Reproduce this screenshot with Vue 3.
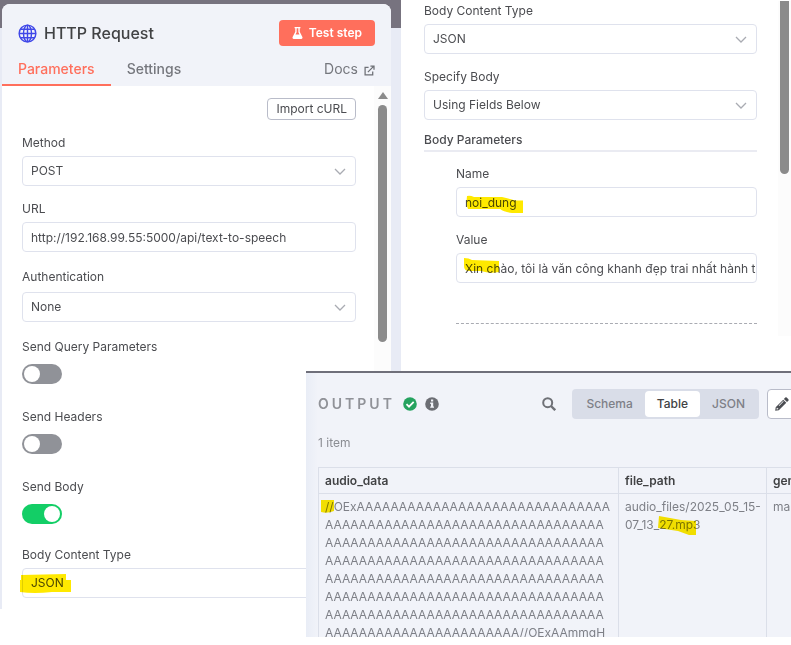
<script setup>
import { ref } from 'vue'

const method = ref('POST')
const url = ref('http://192.168.99.55:5000/api/text-to-speech')
const auth = ref('None')
const sendQuery = ref(false)
const sendHeaders = ref(false)
const sendBody = ref(true)
const contentType = ref('JSON')
const specifyBody = ref('Using Fields Below')
const paramName = ref('noi_dung')
const paramValue = ref('Xin chào, tôi là văn công khanh đẹp trai nhất hành tinh')

const views = ['Schema', 'Table', 'JSON']
const view = ref('Table')

const fullLine = 'A'.repeat(33)
const audioLines = [
  'OEx' + 'A'.repeat(30),
  ...Array(6).fill(fullLine),
  'A'.repeat(23) + '//OExAAmmgH',
]
</script>

<template>
  <main class="page">
    <section class="stage">
      <div class="node">
        <header class="node-head">
          <div class="title-row">
            <svg class="globe" viewBox="0 0 20 20" aria-hidden="true">
              <g fill="none" stroke="#4048e8" stroke-width="1.5">
                <circle cx="10" cy="10" r="8.8" />
                <ellipse cx="10" cy="10" rx="4.2" ry="8.8" />
                <path d="M10 1.2v17.6M1.2 10h17.6M2.6 5.6h14.8M2.6 14.4h14.8" />
              </g>
            </svg>
            <h1>HTTP Request</h1>
            <button class="test" type="button">
              <svg viewBox="0 0 12 14" aria-hidden="true">
                <path fill="#fff" fill-rule="evenodd" d="M2.6 0h6.8v1.6h-.8v4l3.1 6.1C12.2 12.8 11.6 14 10.4 14H1.6C.4 14-.2 12.8.3 11.7L3.4 5.6v-4h-.8zM5 1.6v4.4L3.7 8.8h4.6L7 6V1.6z" />
              </svg>
              Test step
            </button>
          </div>
          <nav class="tabs">
            <a class="tab active" href="#parameters">Parameters</a>
            <a class="tab" href="#settings">Settings</a>
            <a class="tab docs" href="#docs">Docs
              <svg viewBox="0 0 12 12" aria-hidden="true">
                <path fill="none" stroke="#6f7177" stroke-width="1.4" d="M5 2.5H1.2v8.3h8.3V7M4.2 7.8l6-6M7 1.2h3.9v3.9" />
              </svg>
            </a>
          </nav>
        </header>

        <div class="node-body">
          <form class="form" @submit.prevent>
            <button class="curl" type="button">Import cURL</button>
            <div class="field">
              <label for="method">Method</label>
              <div class="control">
                <select id="method" v-model="method"><option>POST</option></select>
                <svg class="chev" viewBox="0 0 12 7"><path d="M1 1l5 5 5-5" /></svg>
              </div>
            </div>
            <div class="field after-field">
              <label for="url">URL</label>
              <div class="control"><input id="url" v-model="url" type="text" /></div>
            </div>
            <div class="field loose">
              <label for="auth">Authentication</label>
              <div class="control">
                <select id="auth" v-model="auth"><option>None</option></select>
                <svg class="chev" viewBox="0 0 12 7"><path d="M1 1l5 5 5-5" /></svg>
              </div>
            </div>
            <div class="toggles">
              <div class="toggle">
                <label for="sq">Send Query Parameters</label>
                <input id="sq" v-model="sendQuery" type="checkbox" />
              </div>
              <div class="toggle">
                <label for="sh">Send Headers</label>
                <input id="sh" v-model="sendHeaders" type="checkbox" />
              </div>
              <div class="toggle">
                <label for="sb">Send Body</label>
                <input id="sb" v-model="sendBody" type="checkbox" />
              </div>
            </div>
            <div class="field">
              <label for="ct">Body Content Type</label>
              <div class="control">
                <select id="ct" v-model="contentType"><option>JSON</option></select>
                <svg class="mark mark-json" viewBox="0 0 51 19"><path d="M1 1L46 0V6H51V18L32 18Q14 20 0 18V6L1 6Z" /></svg>
              </div>
            </div>
          </form>
          <div class="scroll" aria-hidden="true">
            <i class="arrow"></i>
            <i class="thumb"></i>
          </div>
        </div>
      </div>
    </section>

    <section class="body-panel">
      <form class="body-form" @submit.prevent>
        <div class="field">
          <label for="ct2">Body Content Type</label>
          <div class="control">
            <select id="ct2" v-model="contentType"><option>JSON</option></select>
            <svg class="chev" viewBox="0 0 12 7"><path d="M1 1l5 5 5-5" /></svg>
          </div>
        </div>
        <div class="field after-field">
          <label for="sp">Specify Body</label>
          <div class="control">
            <select id="sp" v-model="specifyBody"><option>Using Fields Below</option></select>
            <svg class="chev" viewBox="0 0 12 7"><path d="M1 1l5 5 5-5" /></svg>
          </div>
        </div>
        <h2>Body Parameters</h2>
        <div class="params">
          <div class="field">
            <label for="pn">Name</label>
            <div class="control">
              <input id="pn" v-model="paramName" type="text" />
              <svg class="mark mark-name" viewBox="0 0 58 18"><path d="M1 1Q4 0 8 2L36 2Q44 4 49 5.5H57V18H46Q38 17 34 14H2Q0 10 1 1Z" /></svg>
            </div>
          </div>
          <div class="field after-field">
            <label for="pv">Value</label>
            <div class="control">
              <input id="pv" v-model="paramValue" type="text" />
              <svg class="mark mark-value" viewBox="0 0 35 15"><path d="M0 0Q5 0 8 2L35 3V14Q26 16 17 13L5 13Q0 13 0 8Z" /></svg>
            </div>
          </div>
          <hr />
        </div>
      </form>
      <div class="scroll2" aria-hidden="true"><i class="thumb2"></i></div>
    </section>

    <section class="output">
      <div class="out-bar">
        <h2 class="out-title">OUTPUT</h2>
        <svg class="dot" viewBox="0 0 14 14" aria-hidden="true">
          <circle cx="7" cy="7" r="6.8" fill="#25a35f" />
          <path d="M3.5 7.2l2.5 2.5 4.7-4.8" fill="none" stroke="#fff" stroke-width="1.8" />
        </svg>
        <svg class="dot" viewBox="0 0 14 14" aria-hidden="true">
          <circle cx="7" cy="7" r="6.8" fill="#6c6e74" />
          <path d="M6 2.6h2.2v2H6zM5.2 5.6h3v3.8h.8v1.4H5.2V9.4H6V7h-.8z" fill="#f1f3f9" />
        </svg>
        <button class="search" type="button" aria-label="Search">
          <svg viewBox="0 0 14 14"><g fill="none" stroke="#6f7177" stroke-width="2"><circle cx="5.7" cy="5.7" r="4.5" /><path d="M9 9l4.2 4.2" stroke-width="2.4" /></g></svg>
        </button>
        <div class="seg">
          <button v-for="v in views" :key="v" type="button" :class="{ on: v === view }" @click="view = v">{{ v }}</button>
        </div>
        <button class="edit" type="button" aria-label="Edit">
          <svg viewBox="0 0 14 14"><path fill="#4b4d52" fill-rule="evenodd" d="M10.3.6Q11 0 11.7.6L13.4 2.3Q14 3 13.4 3.7L12 5.1 8.9 2zM8.2 2.7l3.1 3.1-7.5 7.5L.2 13.8.7 10.2zM1.8 10.8l-.3 1.7 1.7-.3v-1h-1v-.4zM4.2 9l4.4-4.4-.5-.5L3.7 8.5z" /></svg>
        </button>
      </div>
      <p class="count">1 item</p>
      <table>
        <thead>
          <tr><th class="c1">audio_data</th><th class="c2">file_path</th><th>gender</th></tr>
        </thead>
        <tbody>
          <tr>
            <td><span class="hl-slash">//<svg class="mark" viewBox="0 0 13 13"><path d="M0 0H13V11Q6 14 0 12Z" /></svg></span><template v-for="(l, i) in audioLines" :key="i">{{ l }}<br /></template></td>
            <td>audio_files/2025_05_15-<br />07_13_<span class="hl-file">27.mp<svg class="mark" viewBox="0 0 38 19"><path d="M1 0L23 4 38 5V19H31L20 15 0 12Z" /></svg></span>3</td>
            <td>male</td>
          </tr>
        </tbody>
      </table>
    </section>
  </main>
</template>

<style>
body {
  background: #fff;
}
</style>

<style scoped>
.page {
  position: relative;
  display: grid;
  grid-template-columns: 401px minmax(0, 1fr);
  align-items: start;
  min-height: 637px;
  overflow: hidden;
  font-family: Inter, "Liberation Sans", sans-serif;
  font-size: 12px;
  line-height: 18px;
  color: #4b4c50;
}
.page * {
  box-sizing: border-box;
}
h1,
h2,
p {
  margin: 0;
}
button,
input,
select {
  font: inherit;
  color: inherit;
}
a {
  color: inherit;
  text-decoration: none;
}
.stage {
  padding: 4px 10px 0 2px;
  background: linear-gradient(#77737f 28px, #e8ebf5 28px);
}
.node {
  border-radius: 8px 8px 0 0;
  overflow: hidden;
  background: #fff;
}
.node-head {
  background: #f1f3f9;
}
.title-row {
  display: flex;
  align-items: center;
  padding: 16px 16px 0;
  height: 42px;
}
.globe {
  width: 19px;
  height: 19px;
}
h1 {
  margin-left: 7px;
  font-size: 16px;
  font-weight: 500;
  color: #414244;
}
.test {
  display: flex;
  align-items: center;
  gap: 6px;
  height: 26px;
  margin-left: auto;
  padding: 0 13px;
  border: 0;
  border-radius: 4px;
  background: #ff6f5c;
  color: #fff;
  font-weight: 600;
}
.test svg {
  width: 11px;
  height: 12px;
}
.tabs {
  display: flex;
  height: 40px;
  font-size: 14px;
  font-weight: 500;
  color: #75777d;
}
.tab {
  padding: 14px 16px 0;
}
.tab.active {
  color: #ff6f5c;
  border-bottom: 2px solid #ff6f5c;
}
.docs {
  display: flex;
  gap: 6px;
  margin-left: auto;
  font-weight: 400;
}
.docs svg {
  width: 11px;
  height: 11px;
  margin-top: 5px;
}
.node-body {
  display: flex;
}
.form {
  flex: 1;
  display: flex;
  flex-direction: column;
  padding: 12px 19px 11px 20px;
}
.curl {
  align-self: flex-end;
  height: 22px;
  margin-bottom: 14px;
  padding: 0 8px;
  border: 1px solid #b9bcc9;
  border-radius: 4px;
  background: #fff;
}
.field {
  display: flex;
  flex-direction: column;
  gap: 4px;
}
.after-field {
  margin-top: 14px;
}
.loose {
  margin-top: 16px;
  gap: 6px;
}
.control {
  position: relative;
}
.control input,
.control select {
  display: block;
  width: 100%;
  height: 30px;
  margin: 0;
  padding: 0 8px;
  border: 1px solid #dfe2ed;
  border-radius: 4px;
  background: #fff;
  appearance: none;
  outline: 0;
}
.control input {
  padding-right: 0;
}
.chev {
  position: absolute;
  right: 10px;
  top: 12px;
  width: 12px;
  height: 7px;
  fill: none;
  stroke: #a9abb2;
  stroke-width: 1.3;
  pointer-events: none;
}
.mark {
  position: absolute;
  fill: #ffe900;
  mix-blend-mode: multiply;
  pointer-events: none;
}
.mark-json {
  left: -2px;
  top: 6px;
  width: 51px;
  height: 19px;
}
.mark-name {
  left: 10px;
  top: 8px;
  width: 58px;
  height: 18px;
}
.mark-value {
  left: 8px;
  top: 5px;
  width: 35px;
  height: 15px;
}
.toggles {
  display: flex;
  flex-direction: column;
  gap: 24px;
  padding: 16px 0 22px;
}
.toggle {
  display: flex;
  flex-direction: column;
  align-items: flex-start;
  gap: 8px;
}
.toggle input {
  display: flex;
  width: 40px;
  height: 20px;
  margin: 0;
  padding: 2px;
  border-radius: 10px;
  background: #909298;
  appearance: none;
}
.toggle input::before {
  content: "";
  width: 16px;
  height: 16px;
  border-radius: 50%;
  background: #fff;
}
.toggle input:checked {
  justify-content: flex-end;
  background: #13ce66;
}
.scroll {
  display: flex;
  flex-direction: column;
  align-items: center;
  gap: 6px;
  width: 17px;
  margin-left: -1px;
  padding-top: 6px;
  background: #fcfcfc;
}
.arrow {
  border: 5px solid transparent;
  border-top: 0;
  border-bottom: 7px solid #8b8b8b;
}
.thumb {
  width: 9px;
  height: 237px;
  border-radius: 5px;
  background: #8b8b8b;
}
.body-panel {
  display: flex;
  justify-content: space-between;
  gap: 21px;
  padding-top: 1px;
}
.body-form {
  flex: 1;
  min-width: 0;
  padding: 1px 0 12px 23px;
}
.body-form h2 {
  margin-top: 11px;
  padding-bottom: 1px;
  border-bottom: 2px solid #eaebf2;
  font-size: 12px;
  font-weight: 500;
}
.params {
  padding: 13px 0 0 32px;
}
hr {
  margin: 40px 0 0;
  border: 0;
  border-top: 1px dashed #a9abb2;
}
.scroll2 {
  width: 13px;
  background: #fcfcfc;
}
.thumb2 {
  display: block;
  width: 9px;
  height: 173px;
  margin-left: 2px;
  border-radius: 0 0 5px 5px;
  background: #8b8b8b;
}
.output {
  position: absolute;
  left: 306px;
  right: 0;
  top: 371px;
  bottom: 0;
  overflow: hidden;
  padding: 16px 0 0 12px;
  border-top: 2px solid #6f6f7a;
  background: linear-gradient(90deg, #e9edf6, #f1f3f9 12px);
}
.out-bar {
  display: flex;
  align-items: center;
  height: 30px;
}
.out-title {
  font-size: 14px;
  font-weight: 600;
  letter-spacing: 3px;
  color: #909298;
}
.dot {
  width: 14px;
  height: 14px;
  margin-left: 8px;
}
.search {
  margin-left: auto;
  padding: 0 16px;
  border: 0;
  background: none;
}
.search svg {
  display: block;
  width: 14px;
  height: 14px;
}
.seg {
  display: flex;
  height: 30px;
  padding: 2px;
  border-radius: 4px;
  background: #d9dde8;
}
.seg button {
  padding: 0 12px;
  border: 0;
  border-radius: 4px;
  background: none;
  font-weight: 500;
  color: #7e8087;
}
.seg .on {
  background: #fff;
  color: #414244;
}
.edit {
  width: 32px;
  height: 30px;
  margin: 0 -8px 0 8px;
  padding: 0 0 0 7px;
  border: 1px solid #b9bcc9;
  border-radius: 4px;
  background: #fff;
}
.edit svg {
  display: block;
  width: 14px;
  height: 14px;
}
.count {
  margin: 15px 0;
  color: #8b8d93;
}
table {
  width: 560px;
  table-layout: fixed;
  border-collapse: collapse;
}
th,
td {
  padding: 4px 6px 3px;
  border: 1px solid #dbdfe9;
  text-align: left;
  vertical-align: top;
  white-space: nowrap;
}
th {
  color: #414244;
  font-weight: 600;
}
td {
  color: #7e8087;
}
.c1 {
  width: 300px;
}
.c2 {
  width: 148px;
}
.hl-slash,
.hl-file {
  position: relative;
}
.hl-slash .mark {
  left: -4px;
  top: 1px;
  width: 13px;
  height: 13px;
}
.hl-file .mark {
  left: -1px;
  top: -1px;
  width: 38px;
  height: 19px;
}
</style>
